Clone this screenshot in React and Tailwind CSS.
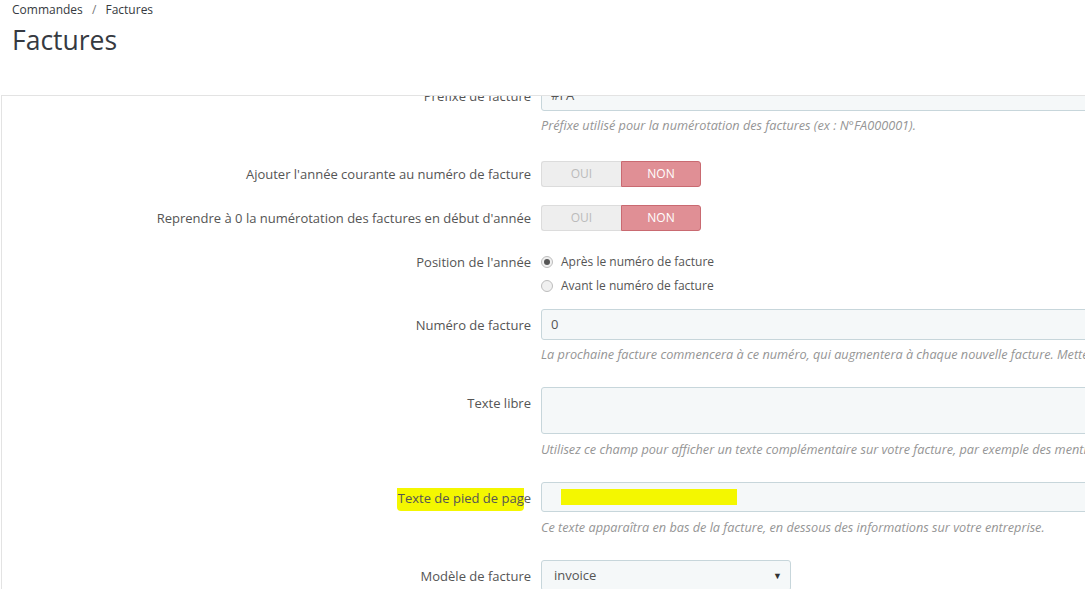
import React from "react";

const Label = ({ children, pt = "pt-[7px]" }) => (
  <div className={`w-[531px] shrink-0 pr-0 text-right leading-[18px] ${pt}`}>{children}</div>
);

const Help = ({ children, mt = "mt-[6px]" }) => (
  <p className={`${mt} whitespace-nowrap text-[12.7px] leading-[18px] italic text-[#959595]`}>{children}</p>
);

const TextInput = ({ value, h = "h-[31px]", children }) => (
  <div
    className={`${h} w-[640px] rounded-[3px] border border-[#c7d6db] bg-[#f5f8f9] px-[9px] text-[13px] leading-[29px] text-[#555]`}
  >
    {value}
    {children}
  </div>
);

const Toggle = () => (
  <div className="flex h-[26px] w-[160px] text-[12px]">
    <div className="flex w-[80px] items-center justify-center rounded-l-[3px] border border-r-0 border-[#dcdcdc] bg-[#eeeeee] text-[#bbbbbb]">
      OUI
    </div>
    <div className="flex w-[80px] items-center justify-center rounded-r-[3px] border border-[#c96a71] bg-[#e08f95] text-white">
      NON
    </div>
  </div>
);

const Radio = ({ checked, children }) => (
  <div className="flex h-[24px] items-center gap-[8px] text-[12px]">
    <span className="flex h-[12px] w-[12px] items-center justify-center rounded-full border border-[#bdbdbd] bg-[#f0f0f0]">
      {checked && <span className="h-[6px] w-[6px] rounded-full bg-[#555]" />}
    </span>
    <span>{children}</span>
  </div>
);

export default function App() {
  return (
    <div
      className="h-[589px] w-[1085px] overflow-hidden bg-white text-[13px] text-[#555]"
      style={{ fontFamily: '"Open Sans", "Liberation Sans", sans-serif' }}
    >
      {/* header */}
      <div className="h-[95px] px-[12px] pt-[1px]">
        <div className="text-[12px] leading-[18px] text-[#363a41]">
          Commandes <span className="mx-[6px] text-[#777]">/</span> Factures
        </div>
        <h1 className="mt-[5px] text-[26.5px] leading-[32px] text-[#363a41]">Factures</h1>
      </div>

      {/* panel */}
      <div className="ml-[1px] h-[494px] overflow-hidden border-l border-t border-[#e3e3e3]">
        <div className="-mt-[16px] -ml-[2px] flex flex-col">
          {/* préfixe */}
          <div className="flex gap-[10px]">
            <Label>Préfixe de facture</Label>
            <div>
              <TextInput value="#FA" />
              <Help mt="mt-[5px]">Préfixe utilisé pour la numérotation des factures (ex : N°FA000001).</Help>
            </div>
          </div>

          <div className="mt-[27px] flex gap-[10px]">
            <Label pt="pt-[4px]">Ajouter l'année courante au numéro de facture</Label>
            <Toggle />
          </div>

          <div className="mt-[18px] flex gap-[10px]">
            <Label pt="pt-[4px]">Reprendre à 0 la numérotation des factures en début d'année</Label>
            <Toggle />
          </div>

          <div className="mt-[19px] flex gap-[10px]">
            <Label pt="pt-[3px]">Position de l'année</Label>
            <div>
              <Radio checked>Après le numéro de facture</Radio>
              <Radio>Avant le numéro de facture</Radio>
            </div>
          </div>

          <div className="mt-[11px] flex gap-[10px]">
            <Label>Numéro de facture</Label>
            <div>
              <TextInput value="0" />
              <Help mt="mt-[5px]">
                La prochaine facture commencera à ce numéro, qui augmentera à chaque nouvelle facture. Mettez 0 pour
                continuer la numérotation actuelle.
              </Help>
            </div>
          </div>

          <div className="mt-[24px] flex gap-[10px]">
            <Label>Texte libre</Label>
            <div>
              <TextInput h="h-[47px]" />
              <Help mt="mt-[6px]">
                Utilisez ce champ pour afficher un texte complémentaire sur votre facture, par exemple des mentions
                légales.
              </Help>
            </div>
          </div>

          <div className="mt-[24px] flex gap-[10px]">
            <Label>
              <span className="rounded-b-[4px] bg-[#f4f700] pb-[4px] pl-[1px] pt-[1px]">Texte de pied de pag</span>e
            </Label>
            <div>
              <TextInput h="h-[30px]">
                <div className="ml-[10px] mt-[6px] h-[16px] w-[176px] bg-[#f4f700]" />
              </TextInput>
              <Help mt="mt-[6px]">Ce texte apparaîtra en bas de la facture, en dessous des informations sur votre entreprise.</Help>
            </div>
          </div>

          <div className="mt-[24px] flex gap-[10px]">
            <Label>Modèle de facture</Label>
            <div className="flex h-[31px] w-[250px] items-center justify-between rounded-[3px] border border-[#c7d6db] bg-[#f5f8f9] pl-[12px] pr-[8px] text-[13px]">
              <span>invoice</span>
              <span className="text-[9px] text-[#333]">▼</span>
            </div>
          </div>
        </div>
      </div>
    </div>
  );
}
